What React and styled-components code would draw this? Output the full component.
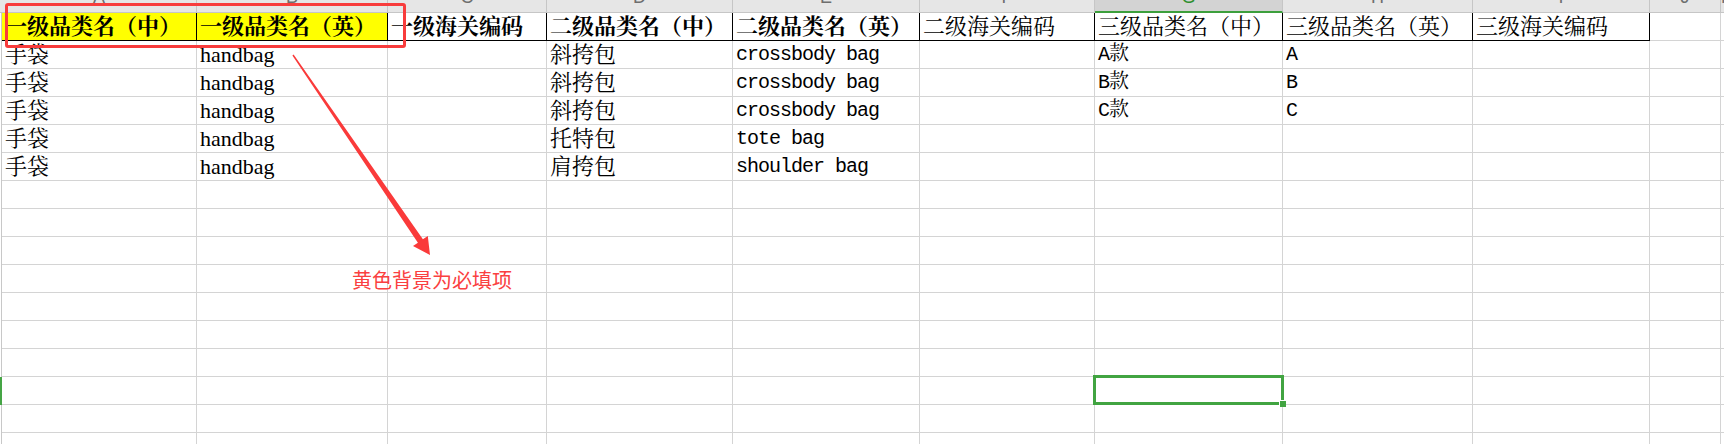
import React from 'react';
import styled, { createGlobalStyle } from 'styled-components';

const GlobalStyle = createGlobalStyle`
  html, body {
    margin: 0;
    padding: 0;
    background: #fff;
  }
  body {
    width: 1724px;
    height: 444px;
    overflow: hidden;
  }
`;

const SERIF = '"Liberation Serif", "Noto Serif CJK SC", "Noto Sans CJK SC", serif';
const MONO = '"Liberation Mono", "Noto Serif CJK SC", "Noto Sans CJK SC", monospace';

const letters = ['A', 'B', 'C', 'D', 'E', 'F', 'G', 'H', 'I', 'J', 'K'];
const widths = [195, 191, 159, 186, 187, 175, 188, 190, 177, 71];
const monoCols = [4, 6, 7];
const activeCol = 6;
const activeRow = 12;

const headers = [
    { text: '一级品类名（中）', yellow: true, bold: true },
    { text: '一级品类名（英）', yellow: true, bold: true },
    { text: '一级海关编码', bold: true },
    { text: '二级品类名（中）', bold: true },
    { text: '二级品类名（英）', bold: true },
    { text: '二级海关编码' },
    { text: '三级品类名（中）' },
    { text: '三级品类名（英）' },
    { text: '三级海关编码' },
];

const data = [
    ['手袋', 'handbag', '', '斜挎包', 'crossbody bag', '', 'A款', 'A'],
    ['手袋', 'handbag', '', '斜挎包', 'crossbody bag', '', 'B款', 'B'],
    ['手袋', 'handbag', '', '斜挎包', 'crossbody bag', '', 'C款', 'C'],
    ['手袋', 'handbag', '', '托特包', 'tote bag'],
    ['手袋', 'handbag', '', '肩挎包', 'shoulder bag'],
];

const rows = Array.from({ length: 15 }, (_, i) => data[i] || []);

function App() {
    return (
        <>
            <GlobalStyle />
            <Sheet>
                {/* column letters, mostly scrolled out of view */}
                <Corner />
                {letters.map((l, i) => (
                    <ColLetter key={l} $active={i === activeCol}>
                        <span>{l}</span>
                    </ColLetter>
                ))}

                {/* header row */}
                <RowEdge />
                {letters.map((l, i) => {
                    const h = headers[i];
                    return h ? (
                        <HeadCell key={l} $yellow={h.yellow} $bold={h.bold}>{h.text}</HeadCell>
                    ) : (
                        <Cell key={l} />
                    );
                })}

                {rows.map((r, ri) => (
                    <React.Fragment key={ri}>
                        <RowEdge $active={ri === activeRow} />
                        {letters.map((l, ci) => (
                            <Cell key={l} $mono={monoCols.includes(ci)}>
                                {r[ci] || ''}
                                {ri === activeRow && ci === activeCol && (
                                    <Selection>
                                        <FillHandle />
                                    </Selection>
                                )}
                            </Cell>
                        ))}
                    </React.Fragment>
                ))}

                <RedFrame />
                <Arrow width="150" height="215" viewBox="288 50 150 215">
                    <polygon
                        fill="#fa3a3a"
                        points="293.6,54.6 422.9,239.3 427.8,235.9 430,255 413,246.1 417.9,242.7 292.4,55.4" />
                </Arrow>
                <Note>黄色背景为必填项</Note>
            </Sheet>
        </>
    );
}

export default App;

const Sheet = styled.div`
    position: relative;
    display: grid;
    grid-template-columns: 2px ${widths.map(w => w + 'px').join(' ')} 1fr;
    grid-template-rows: 13px repeat(16, 28px);
    width: 1724px;
    height: 444px;
    overflow: hidden;
    background: #fff;
`;

const Corner = styled.div`
    background: #e6e6e6;
    border-bottom: 1px solid #c6c6c6;
`;

const ColLetter = styled.div`
    box-sizing: border-box;
    overflow: hidden;
    text-align: center;
    background: ${p => (p.$active ? '#d3d3d3' : '#e6e6e6')};
    border-right: 1px solid #c6c6c6;
    border-bottom: ${p => (p.$active ? '2px solid #3c9f3c' : '1px solid #c6c6c6')};
    > span {
        display: block;
        margin-top: -12px;
        font-family: "Liberation Sans", Arial, sans-serif;
        font-size: 18px;
        line-height: 18px;
        color: ${p => (p.$active ? '#2f8f2f' : '#6e6e6e')};
    }
`;

const RowEdge = styled.div`
    box-sizing: border-box;
    background: ${p => (p.$active ? '#45a545' : '#fff')};
    border-right: 1px solid ${p => (p.$active ? '#45a545' : '#c8c8c8')};
`;

const Cell = styled.div`
    position: relative;
    box-sizing: border-box;
    border-right: 1px solid #d4d4d4;
    border-bottom: 1px solid #d4d4d4;
    padding-left: 3px;
    white-space: nowrap;
    font-family: ${p => (p.$mono ? MONO : SERIF)};
    font-size: ${p => (p.$mono ? '20px' : '22px')};
    letter-spacing: ${p => (p.$mono ? '-1px' : '0')};
    line-height: 27px;
    color: #000;
`;

const HeadCell = styled.div`
    box-sizing: border-box;
    border-right: 1px solid #000;
    border-bottom: 1px solid #000;
    padding-left: 3px;
    white-space: nowrap;
    overflow: hidden;
    background: ${p => (p.$yellow ? '#ffff00' : '#fff')};
    font-family: ${SERIF};
    font-weight: ${p => (p.$bold ? 700 : 400)};
    font-size: 22px;
    line-height: 27px;
    color: #000;
`;

const Selection = styled.div`
    position: absolute;
    top: -2px;
    left: -2px;
    right: -2px;
    bottom: -1px;
    border: 3px solid #41a441;
    z-index: 3;
    pointer-events: none;
`;

const FillHandle = styled.div`
    position: absolute;
    right: -5px;
    bottom: -5px;
    width: 6px;
    height: 6px;
    background: #41a441;
    border-left: 1px solid #fff;
    border-top: 1px solid #fff;
`;

const RedFrame = styled.div`
    position: absolute;
    left: 5px;
    top: 3px;
    width: 401px;
    height: 45px;
    box-sizing: border-box;
    border: 3px solid #f83c3c;
    border-radius: 3px;
    z-index: 4;
`;

const Arrow = styled.svg`
    position: absolute;
    left: 288px;
    top: 50px;
    z-index: 4;
`;

const Note = styled.div`
    position: absolute;
    left: 352px;
    top: 270px;
    font-family: "Noto Sans CJK SC", sans-serif;
    font-size: 20px;
    line-height: 20px;
    color: #fa4040;
    z-index: 4;
`;
